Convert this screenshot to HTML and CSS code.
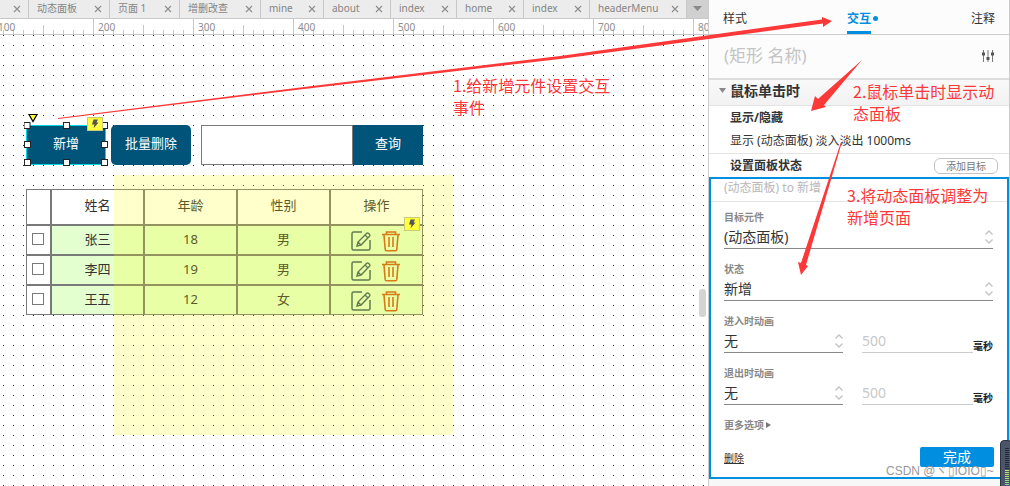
FILE: index.html
```html
<!DOCTYPE html>
<html lang="zh-CN">
<head>
<meta charset="utf-8">
<title>页面编辑器</title>
<link rel="stylesheet" href="styles.css">
</head>
<body>
<svg class="defs" aria-hidden="true">
  <symbol id="close" viewBox="0 0 8 8"><path d="M1 1l6 6M7 1l-6 6" fill="none" stroke="#8c8c8c" stroke-width="1.1"/></symbol>
  <symbol id="bolt" viewBox="0 0 16 14"><rect x=".5" y=".5" width="15" height="13" fill="#ffff3c" stroke="#cccc78"/><path d="M6.500 2.500h4.500L9.500 5.500H11.500L6.500 11.500l1-4H5z" fill="#555"/></symbol>
  <symbol id="edit" viewBox="0 0 22 22"><path d="M12 2H3.500Q2 2 2 3.500v15Q2 20 3.500 20h15q1.500 0 1.500-1.500V10" fill="none" stroke="#3a5c68" stroke-width="1.500"/><path d="M7 16l1-4 8.500-8.500q1-1 2.200 0l.8.8q1 1 0 2L11 15zM15 5l3 3M8 12l3 3" fill="none" stroke="#3a5c68" stroke-width="1.400"/></symbol>
  <symbol id="trash" viewBox="0 0 20 22"><path d="M1 4.500h18M5.500 4V2h9v2M3 5l1.200 14.500q.1 1.300 1.400 1.300h8.800q1.300 0 1.400-1.300L17 5M8 7v10M12 7v10" fill="none" stroke="#cc5a1c" stroke-width="1.600"/></symbol>
  <symbol id="updown" viewBox="0 0 8 14"><path d="M.5 4.500L4 1l3.500 3.500M.5 9.500L4 13l3.500-3.500" fill="none" stroke="#c4c4c4" stroke-width="1.400"/></symbol>
</svg>

<main class="workspace">
  <nav class="tabs">
    <div class="tab"><button class="tab-close" aria-label="关闭"><svg><use href="#close"/></svg></button></div>
    <div class="tab"><a href="#p1">动态面板</a><button class="tab-close" aria-label="关闭"><svg><use href="#close"/></svg></button></div>
    <div class="tab"><a href="#p2">页面 1</a><button class="tab-close" aria-label="关闭"><svg><use href="#close"/></svg></button></div>
    <div class="tab"><a href="#p3">增删改查</a><button class="tab-close" aria-label="关闭"><svg><use href="#close"/></svg></button></div>
    <div class="tab"><a href="#p4">mine</a><button class="tab-close" aria-label="关闭"><svg><use href="#close"/></svg></button></div>
    <div class="tab"><a href="#p5">about</a><button class="tab-close" aria-label="关闭"><svg><use href="#close"/></svg></button></div>
    <div class="tab"><a href="#p6">index</a><button class="tab-close" aria-label="关闭"><svg><use href="#close"/></svg></button></div>
    <div class="tab"><a href="#p7">home</a><button class="tab-close" aria-label="关闭"><svg><use href="#close"/></svg></button></div>
    <div class="tab"><a href="#p8">index</a><button class="tab-close" aria-label="关闭"><svg><use href="#close"/></svg></button></div>
    <div class="tab"><a href="#p9">headerMenu</a><button class="tab-close" aria-label="关闭"><svg><use href="#close"/></svg></button></div>
    <button class="tab-list" aria-label="全部页面"><svg viewBox="0 0 10 6"><path d="M0 0h9L4.500 5z" fill="#888"/></svg></button>
  </nav>
  <div class="ruler"><div class="ruler-scale"><span>100</span><span>200</span><span>300</span><span>400</span><span>500</span><span>600</span><span>700</span><span>800</span></div></div>

  <section class="canvas">
    <button class="widget btn-add">新增</button>
    <button class="widget btn-batch">批量删除</button>
    <input class="widget query-input" type="text" aria-label="查询内容">
    <button class="widget btn-query">查询</button>

    <table class="widget people">
      <thead><tr><th class="col-check"></th><th>姓名</th><th>年龄</th><th>性别</th><th>操作</th></tr></thead>
      <tbody>
        <tr><td class="col-check"><input type="checkbox" aria-label="张三"></td><td>张三</td><td>18</td><td>男</td><td><div class="ops"><svg class="i-edit"><use href="#edit"/></svg><svg class="i-trash"><use href="#trash"/></svg></div></td></tr>
        <tr><td class="col-check"><input type="checkbox" aria-label="李四"></td><td>李四</td><td>19</td><td>男</td><td><div class="ops"><svg class="i-edit"><use href="#edit"/></svg><svg class="i-trash"><use href="#trash"/></svg></div></td></tr>
        <tr><td class="col-check"><input type="checkbox" aria-label="王五"></td><td>王五</td><td>12</td><td>女</td><td><div class="ops"><svg class="i-edit"><use href="#edit"/></svg><svg class="i-trash"><use href="#trash"/></svg></div></td></tr>
      </tbody>
    </table>

    <div class="widget dynamic-panel"></div>
    <svg class="widget selection" viewBox="0 0 84 54">
      <rect x="2.500" y="13.500" width="79" height="39" fill="none" stroke="#00d8e0"/>
      <path d="M5 2.500h8L9 9.500z" fill="#ffff3c" stroke="#000" stroke-width="1.200"/>
      <g fill="#fff" stroke="#222"><rect x="-.5" y="10.500" width="6" height="6" transform="translate(0.500 0)"/><rect x="39.500" y="10.500" width="6" height="6"/><rect x="77.500" y="10.500" width="6" height="6"/><rect x=".5" y="29.500" width="6" height="6"/><rect x="77.500" y="29.500" width="6" height="6"/><rect x=".5" y="47.500" width="6" height="6"/><rect x="39.500" y="47.500" width="6" height="6"/><rect x="77.500" y="47.500" width="6" height="6"/></g>
    </svg>
    <svg class="widget bolt bolt-add"><use href="#bolt"/></svg>
    <svg class="widget bolt bolt-table"><use href="#bolt"/></svg>
    <div class="scroll-thumb"></div>
  </section>
</main>

<aside class="inspector">
  <nav class="panel-tabs"><a href="#style">样式</a><a class="active" href="#interaction">交互</a><a href="#notes">注释</a></nav>
  <div class="name-row">
    <input type="text" placeholder="(矩形 名称)" aria-label="矩形 名称">
    <svg class="sliders" viewBox="0 0 12 12"><path d="M1.500 0v12M6 0v12M10.500 0v12" stroke="#777"/><path d="M0 4h3M4.500 8.500h3M9 4h3" stroke="#555" stroke-width="3"/></svg>
  </div>
  <h2 class="event"><svg viewBox="0 0 7 5"><path d="M0 0h7L3.500 5z" fill="#888"/></svg>鼠标单击时</h2>
  <section class="action">
    <h3>显示/隐藏</h3>
    <p>显示 (动态面板) 淡入淡出 1000ms</p>
  </section>
  <div class="action-head"><h3>设置面板状态</h3><button class="add-target">添加目标</button></div>
  <form class="editor">
    <p class="summary">(动态面板) to 新增</p>
    <div class="fields">
      <div class="field"><label for="target">目标元件</label><div class="pick"><select id="target"><option>(动态面板)</option></select><svg><use href="#updown"/></svg></div></div>
      <div class="field"><label for="state">状态</label><div class="pick"><select id="state"><option>新增</option></select><svg><use href="#updown"/></svg></div></div>
      <div class="field"><label for="enter">进入时动画</label>
        <div class="timing"><div class="pick"><select id="enter"><option>无</option></select><svg><use href="#updown"/></svg></div><input id="enter-ms" type="text" value="500" disabled><label class="unit" for="enter-ms">毫秒</label></div></div>
      <div class="field"><label for="leave">退出时动画</label>
        <div class="timing"><div class="pick"><select id="leave"><option>无</option></select><svg><use href="#updown"/></svg></div><input id="leave-ms" type="text" value="500" disabled><label class="unit" for="leave-ms">毫秒</label></div></div>
      <button type="button" class="more">更多选项<svg viewBox="0 0 5 6"><path d="M0 0v6l5-3z" fill="#777"/></svg></button>
    </div>
    <div class="editor-foot"><a href="#delete">删除</a><button type="button" class="done">完成</button></div>
  </form>
</aside>

<svg class="arrows" viewBox="0 0 1010 486">
  <g fill="#fc3838">
    <path d="M58 118L300 87.500 560 56 822 19.500 822 17l10 4-9 6 0-3.500L560 59 300 89.500 58 119z"/>
    <path d="M862 60L824 105l2 2-15 4 4-15 3 3z"/>
    <path d="M841 142h1L806 265l2 1-7 9-3-13 3 1z"/>
  </g>
</svg>
<p class="note note-1">1.给新增元件设置交互<br>事件</p>
<p class="note note-2">2.鼠标单击时显示动<br>态面板</p>
<p class="note note-3">3.将动态面板调整为<br>新增页面</p>
<p class="watermark">CSDN @ヾ▯IOIO▯~</p>
<div class="meter"><i></i></div>
</body>
</html>
```
FILE: styles.css
```css
* { box-sizing: border-box; }
body {
  margin: 0;
  height: 100vh;
  display: flex;
  overflow: hidden;
  position: relative;
  background: #fff;
  color: #333;
  font: 12px/16px "Noto Sans", "Noto Sans CJK SC", sans-serif;
}
h2, h3, p { margin: 0; font-size: inherit; }
a { color: inherit; text-decoration: none; }
button, input, select { font: inherit; color: inherit; margin: 0; padding: 0; border: 0; background: none; border-radius: 0; }
.defs { position: absolute; width: 0; height: 0; }

.workspace { flex: 1; min-width: 0; display: flex; flex-direction: column; overflow: hidden; }
.tabs {
  display: grid;
  grid-template-columns: 29px 81px 70px 81px 63px 67px 66px 67px 66px 97px 1fr;
  height: 19px;
  background: #ececec;
  border-bottom: 1px solid #c8c8c8;
  color: #858585;
  font-size: 10px;
}
.tab { display: flex; align-items: center; padding: 0 7px 0 8px; border-right: 1px solid #c8c8c8; white-space: nowrap; }
.tab a { line-height: 16px; padding-bottom: 2px; }
.tab-close { margin-left: auto; width: 8px; height: 8px; display: flex; }
.tab-close svg { width: 8px; height: 8px; }
.tab-list { background: #d0d0d0; display: flex; align-items: center; justify-content: center; }
.tab-list svg { width: 10px; height: 6px; }

.ruler { height: 16px; overflow: hidden; border-bottom: 1px solid #c8c8c8; }
.ruler-scale { display: flex; margin-left: -7px; height: 15px; color: #8c8c8c; font-size: 10px; }
.ruler-scale span {
  flex: 0 0 100px;
  padding-left: 4px;
  border-left: 1px solid #c8c8c8;
  background:
    linear-gradient(#c8c8c8, #c8c8c8) 49px 6px / 1px 9px no-repeat,
    repeating-linear-gradient(90deg, transparent 0 9px, #c8c8c8 9px 10px) 0 11px / 99px 4px no-repeat;
}

.canvas {
  flex: 1;
  position: relative;
  overflow: hidden;
  background: conic-gradient(from 90deg at 9px 9px, #1414c8 90deg, transparent 0) 4px 1px / 10px 10px;
  font-size: 13px;
}
.widget { position: absolute; }
.btn-add, .btn-batch, .btn-query { top: 90px; height: 40px; background: #005479; color: #fff; padding-bottom: 4px; }
.btn-add { left: 26px; width: 80px; }
.btn-batch { left: 111px; width: 80px; border-radius: 5px; }
.btn-query { left: 353px; width: 70px; }
.query-input { left: 201px; top: 90px; width: 152px; height: 40px; border: 1px solid #797979; background: #fff; }
.people { left: 26px; top: 154px; width: 397px; table-layout: fixed; border-spacing: 0; background: #fff; }
.people th, .people td { height: 30px; padding: 0 0 2px; border: 1px solid #797979; text-align: center; font-weight: 400; }
.people th { height: 36px; padding-bottom: 4px; }
.people td { background: #e3ffd0; }
.people .col-check { width: 25px; padding: 0; background: #fff; }
.people input { appearance: none; display: block; width: 12px; height: 12px; margin: 0 auto 2px 5px; border: 1px solid #797979; background: #fff; }
.ops { display: flex; align-items: center; justify-content: center; gap: 9px; padding: 3px 2px 0 0; }
.i-edit { width: 22px; height: 22px; }
.i-trash { width: 20px; height: 22px; }
.dynamic-panel { left: 114px; top: 140px; width: 339px; height: 260px; background: rgba(255, 255, 0, .2); }
.selection { left: 24px; top: 77px; width: 84px; height: 54px; }
.bolt { width: 16px; height: 14px; }
.bolt-add { left: 87px; top: 82px; }
.bolt-table { left: 404px; top: 182px; }
.scroll-thumb { position: absolute; right: 2px; top: 254px; width: 7px; height: 28px; border-radius: 3px; background: #d4d4d4; }

.inspector { flex: 0 0 302px; min-width: 0; display: flex; flex-direction: column; background: #f7f7f7; border: solid #ccc; border-width: 0 1px; }
.panel-tabs { display: flex; justify-content: space-between; height: 35px; padding: 0 14px; background: #fcfcfc; border-bottom: 1px solid #ccc; }
.panel-tabs a { padding-top: 11px; }
.panel-tabs .active { position: relative; color: #008fe0; font-weight: 700; border-bottom: 3px solid #008fe0; }
.active::after { content: ""; position: absolute; left: 26px; top: 16px; width: 5px; height: 5px; border-radius: 50%; background: #008fe0; }
.name-row { display: flex; align-items: center; justify-content: space-between; height: 45px; padding: 0 15px 2px; background: #fcfcfc; border-bottom: 2px solid #ddd; }
.name-row input { width: 160px; height: 28px; font-size: 17px; }
.name-row input::placeholder { color: #c4c4c4; opacity: 1; }
.sliders { width: 12px; height: 12px; }
.event { display: flex; align-items: center; gap: 4px; height: 26px; padding: 0 10px 4px; font-size: 14px; background: linear-gradient(#f9f9f9, #f2f2f2); border-bottom: 1px solid #e4e4e4; }
.event svg { width: 7px; height: 5px; }
.action { display: flex; flex-direction: column; gap: 7px; padding: 4px 21px; background: #fff; border-bottom: 1px solid #e4e4e4; }
.action-head { display: flex; align-items: center; justify-content: space-between; height: 23px; padding: 0 11px 0 21px; background: #fff; }
.add-target { width: 64px; height: 16px; border: 1px solid #c4c4c4; border-radius: 6px; font-size: 10px; line-height: 12px; color: #777; }
.editor { border: 2px solid #008fe0; background: #fff; }
.summary { height: 23px; padding: 1px 13px; color: #b8b8b8; border-bottom: 1px solid #e4e4e4; }
.fields { display: flex; flex-direction: column; gap: 12px; padding: 7px 14px 14px 13px; }
.field label, .more { display: block; font-size: 10px; line-height: 16px; font-weight: 700; color: #888; }
.pick { display: grid; align-items: center; flex: 0 0 119px; }
.pick select, .pick svg { grid-area: 1 / 1; }
.pick select { appearance: none; width: 100%; height: 24px; border-bottom: 1px solid #888; font-size: 14px; }
.pick svg { justify-self: end; width: 8px; height: 14px; pointer-events: none; }
.timing { display: flex; align-items: end; }
.timing input { flex: 1; min-width: 0; height: 24px; margin-left: 19px; border-bottom: 1px solid #ccc; font-size: 14px; color: #c8c8c8; }
.timing .unit { flex: 0 0 20px; line-height: 14px; color: #222; }
.more { display: flex; align-items: center; gap: 2px; align-self: start; }
.more svg { width: 5px; height: 6px; }
.editor-foot { display: flex; align-items: center; justify-content: space-between; padding: 0 13px 10px; }
.editor-foot a { padding-top: 2px; font-size: 10px; text-decoration: underline; }
.done { width: 74px; height: 20px; border-radius: 2px; background: #008fe0; color: #fff; font-size: 14px; line-height: 20px; }

.arrows { position: absolute; left: 0; top: 0; width: 1010px; height: 486px; pointer-events: none; }
.note { position: absolute; color: #fc3838; font: 16px/22px "Noto Sans CJK SC", sans-serif; white-space: nowrap; }
.note-1 { left: 453px; top: 74px; }
.note-2 { left: 853px; top: 80px; }
.note-3 { left: 847px; top: 184px; }
.watermark { position: absolute; left: 886px; top: 463px; color: #999; font: 12px/16px "Liberation Sans", "Noto Sans CJK SC", sans-serif; white-space: nowrap; }
.meter { position: absolute; left: 1000px; top: 440px; width: 12px; height: 50px; padding: 7px 4px; border-radius: 4px; background: #4c5468; border: 1px solid #2c3444; }
.meter i { display: block; width: 4px; height: 42px; background: repeating-linear-gradient(transparent 0 1px, #4c5468 1px 2px), linear-gradient(#222a38 22px, #c8e860 22px, #60e0a0); }
```
